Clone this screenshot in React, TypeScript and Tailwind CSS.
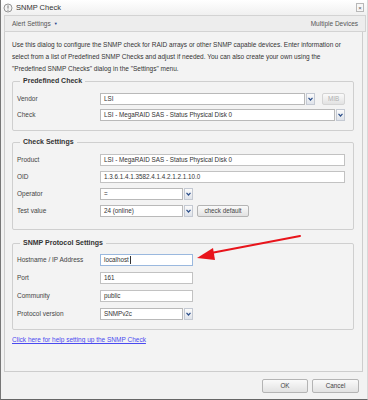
import React from "react"

const font = { fontFamily: '"Liberation Sans", Arial, sans-serif' }

function Chevron() {
  return (
    <span className="flex h-full w-[9px] shrink-0 items-center justify-center border border-[#c4c9d2] bg-gradient-to-b from-[#fbfbfb] to-[#dfe3ea]">
      <svg width="5" height="4" viewBox="0 0 5 4">
        <path d="M0.5 0.8 L2.5 3 L4.5 0.8" fill="none" stroke="#2d4f8a" strokeWidth="1.2" />
      </svg>
    </span>
  )
}

function Select({ value, className }: { value: string; className: string }) {
  return (
    <div className={`flex h-[12px] items-stretch gap-[1px] ${className}`}>
      <div className="flex flex-1 items-center border border-[#b9b9b9] bg-white pl-[3px] text-[6.3px] text-[#333]">{value}</div>
      <Chevron />
    </div>
  )
}

function Input({ value, className, focused }: { value: string; className: string; focused?: boolean }) {
  return (
    <div
      className={`flex h-[12px] items-center border bg-white pl-[3px] text-[6.3px] text-[#333] ${
        focused ? "border-[#9ab8de]" : "border-[#c2c2c2]"
      } ${className}`}
    >
      {value}
      {focused && <span className="ml-[1px] h-[8px] w-px bg-[#333]" />}
    </div>
  )
}

function Row({ label, children }: { label: string; children: React.ReactNode }) {
  return (
    <div className="flex items-center">
      <span className="w-[83px] shrink-0 text-[6.5px] text-[#444]">{label}</span>
      {children}
    </div>
  )
}

function Fieldset({ legend, className, children }: { legend: string; className: string; children: React.ReactNode }) {
  return (
    <fieldset className={`rounded-[2px] border border-[#cfcfcf] pl-[4px] ${className}`}>
      <legend className="ml-[3px] px-[3px] text-[7px] font-bold leading-[10px] text-[#333]">{legend}</legend>
      {children}
    </fieldset>
  )
}

function Button({ label, className, disabled }: { label: string; className: string; disabled?: boolean }) {
  return (
    <div
      className={`flex items-center justify-center rounded-[2px] border bg-gradient-to-b from-[#fafafa] to-[#e2e2e2] text-[6.3px] ${
        disabled ? "border-[#d4d4d4] text-[#b0b0b0]" : "border-[#b4b4b4] text-[#444]"
      } ${className}`}
    >
      {label}
    </div>
  )
}

export default function App() {
  return (
    <div style={font} className="relative flex h-[400px] w-[368px] flex-col border-b border-l border-r border-b-[#666] border-l-[#777] border-r-[#d8d8d8] bg-[#f2f2f2]">
      {/* title bar */}
      <div className="flex h-[15px] shrink-0 items-center bg-gradient-to-b from-[#ffffff] to-[#f0f0f0] pl-[2px] pr-[3px]">
        <svg width="10" height="10" viewBox="0 0 10 10">
          <circle cx="5" cy="5" r="4" fill="#f4f4f4" stroke="#8a8a8a" strokeWidth="0.9" />
          <path d="M5 2.4 V5.6" stroke="#7a7a7a" strokeWidth="1" />
          <circle cx="5" cy="7.2" r="0.6" fill="#7a7a7a" />
        </svg>
        <span className="ml-[3px] text-[7.5px] text-[#333]">SNMP Check</span>
        <span className="ml-auto flex h-[9px] w-[8px] items-center justify-center border border-[#b8b8b8] bg-[#f7f7f7] text-[6px] leading-none text-[#555]">
          ×
        </span>
      </div>

      {/* toolbar */}
      <div className="ml-[3px] mr-[1px] flex h-[17px] shrink-0 items-center border border-[#d3d3d3] bg-[#ededed] px-[7px] text-[6.5px] text-[#555]">
        <span>Alert Settings</span>
        <span className="ml-[3px] text-[4px] text-[#1f3f8a]">▼</span>
        <span className="ml-auto">Multiple Devices</span>
      </div>

      {/* content panel */}
      <div className="ml-[3px] mr-[4px] flex flex-1 flex-col border border-t-0 border-[#cdcdcd] bg-[#f3f3f3] pl-[7px] pr-[8px] pt-[7px]">
        <p className="text-[6.5px] leading-[12px] text-[#333]">
          Use this dialog to configure the SNMP check for RAID arrays or other SNMP capable devices. Enter information or select from a list of Predefined SNMP Checks and adjust if needed. You can also create your own using the "Predefined SNMP Checks" dialog in the "Settings" menu.
        </p>

        <Fieldset legend="Predefined Check" className="mt-[1px] flex flex-col gap-[4px] pb-[9px] pt-[7px]">
          <Row label="Vendor">
            <Select value="LSI" className="w-[215px]" />
            <Button label="MIB" disabled className="ml-[7px] h-[12px] w-[23px]" />
          </Row>
          <Row label="Check">
            <Select value="LSI - MegaRAID SAS - Status Physical Disk 0" className="w-[245px]" />
          </Row>
        </Fieldset>

        <Fieldset legend="Check Settings" className="mt-[6px] flex flex-col gap-[5px] pb-[12px] pt-[7px]">
          <Row label="Product">
            <Input value="LSI - MegaRAID SAS - Status Physical Disk 0" className="w-[245px]" />
          </Row>
          <Row label="OID">
            <Input value="1.3.6.1.4.1.3582.4.1.4.2.1.2.1.10.0" className="w-[245px]" />
          </Row>
          <Row label="Operator">
            <Select value="=" className="w-[93px]" />
          </Row>
          <Row label="Test value">
            <Select value="24 (online)" className="w-[93px]" />
            <Button label="check default" className="ml-[4px] h-[12px] w-[52px]" />
          </Row>
        </Fieldset>

        <Fieldset legend="SNMP Protocol Settings" className="mt-[8px] flex flex-col gap-[6px] pb-[9px] pt-[6px]">
          <Row label="Hostname / IP Address">
            <Input value="localhost" focused className="w-[93px]" />
          </Row>
          <Row label="Port">
            <Input value="161" className="w-[93px]" />
          </Row>
          <Row label="Community">
            <Input value="public" className="w-[93px]" />
          </Row>
          <Row label="Protocol version">
            <Select value="SNMPv2c" className="w-[93px]" />
          </Row>
        </Fieldset>

        <a className="mt-[5px] text-[6.5px] text-[#4a4af0] underline" href="#">
          Click here for help setting up the SNMP Check
        </a>
      </div>

      {/* footer */}
      <div className="flex h-[27px] shrink-0 items-center justify-end gap-[4px] pr-[8px]">
        <Button label="OK" className="h-[14px] w-[46px]" />
        <Button label="Cancel" className="h-[14px] w-[47px]" />
      </div>

      {/* red arrow annotation */}
      <svg className="pointer-events-none absolute left-0 top-0" width="368" height="400" viewBox="0 0 368 400">
        <path d="M299 236 L210 253" stroke="#e8141b" strokeWidth="2" strokeLinecap="round" />
        <path d="M196 258 L212 248 L214 260 Z" fill="#e8141b" />
      </svg>
    </div>
  )
}
